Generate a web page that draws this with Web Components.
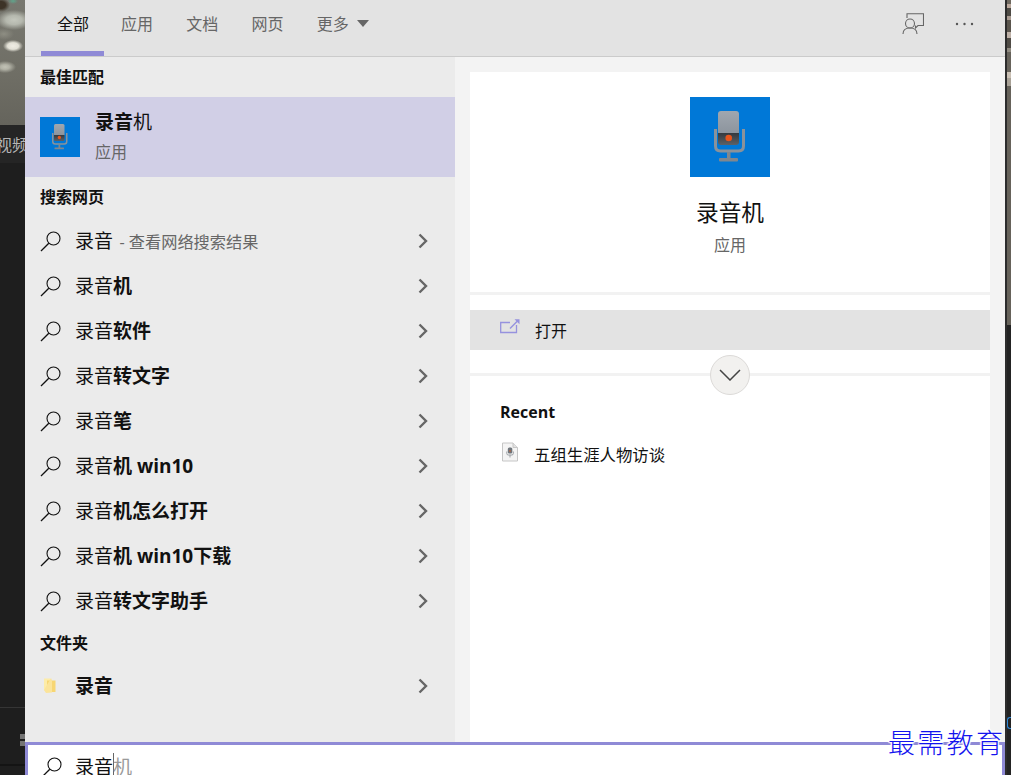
<!DOCTYPE html>
<html lang="zh"><head><meta charset="utf-8">
<style>
html,body{margin:0;padding:0;background:#1e1e1e;}
body{width:1011px;height:775px;overflow:hidden;font-family:"Open Sans","Noto Sans CJK SC",sans-serif;}
</style></head><body>
<search-shell>
  <search-tabs slot="tabs"></search-tabs>
  <results-pane slot="left"></results-pane>
  <preview-pane slot="right"></preview-pane>
  <search-box slot="box"></search-box>
</search-shell>
<script>
const FONT='"Open Sans","Noto Sans CJK SC",sans-serif';
const make=(name,html)=>{customElements.define(name,class extends HTMLElement{
  connectedCallback(){ if(this.shadowRoot)return; const r=this.attachShadow({mode:'open'}); r.innerHTML=html(this);} });};
const MIC=(s)=>`<svg width="${s}" height="${s}" viewBox="0 0 80 80" style="display:block"><defs>
<linearGradient id="mb" x1="0" y1="0" x2="0" y2="1"><stop offset="0" stop-color="#a0a7af"/><stop offset="1" stop-color="#8b939c"/></linearGradient>
<linearGradient id="mk" x1="0" y1="0" x2="0" y2="1"><stop offset="0" stop-color="#34393e"/><stop offset="1" stop-color="#5b6167"/></linearGradient></defs>
<rect width="80" height="80" fill="#0078d7"/>
<path d="M25.500 32v17q0 5 5 5h18q5 0 5-5V32" fill="none" stroke="#8a929a" stroke-width="3"/>
<rect x="28" y="14" width="21" height="24" rx="3" fill="url(#mb)"/>
<path d="M28 36h21v9q0 3-3 3h-15q-3 0-3-3z" fill="url(#mk)"/>
<circle cx="38.700" cy="41" r="3.300" fill="#e8541a"/>
<rect x="37" y="55" width="3.500" height="7" fill="#80878e"/>
<rect x="29" y="61" width="19" height="3.500" rx="1" fill="#80878e"/></svg>`;
const LENS=`<svg width="22" height="22" viewBox="0 0 22 22" style="display:block"><circle cx="13.500" cy="8.500" r="6.500" fill="none" stroke="#111" stroke-width="1.100"/><path d="M8.800 13.200L1 21" stroke="#111" stroke-width="1.300" fill="none"/></svg>`;

make('search-shell',()=>`<style>
:host{display:grid;grid-template-columns:25px 980px 6px;width:1011px;height:775px;overflow:hidden;font-family:${FONT};}
.panel{display:grid;grid-template-columns:430px 550px;grid-template-rows:57px 685px 33px;min-width:0;height:775px;}
::slotted([slot=tabs]),::slotted([slot=box]){grid-column:1 / 3;}
.mark{position:absolute;left:888px;top:726px;font:300 27px/32px "Noto Sans CJK JP",serif;letter-spacing:2.300px;color:#1414ee;white-space:nowrap;
 text-shadow:0 0 2px #fff,0 0 2px #fff,1px 1px 1px #fff,-1px -1px 1px #fff,1px -1px 1px #fff,-1px 1px 1px #fff;}
</style>
<left-gutter></left-gutter>
<div class="panel"><slot name="tabs"></slot><slot name="left"></slot><slot name="right"></slot><slot name="box"></slot></div>
<right-gutter></right-gutter>
<div class="mark">最需教育</div>`);

make('left-gutter',()=>`<style>
:host{display:flex;flex-direction:column;background:#1e1e1e;overflow:hidden;width:25px;height:775px;}
.photo{height:125px;flex:none;background:
 radial-gradient(ellipse 5px 3px at 13px 1px,#5fa58c 0,transparent 100%),
 radial-gradient(ellipse 9px 7px at 1px 5px,#3d3327 0,#3d3327 50%,transparent 100%),
 radial-gradient(ellipse 10px 6px at 13px 46px,#efece4 0,#e2e0d6 55%,transparent 100%),
 radial-gradient(ellipse 11px 6px at 5px 67px,#c2c2b6 0,#b2b2a6 40%,transparent 100%),
 radial-gradient(ellipse 18px 10px at 14px 20px,#c4c7bd 0,#b5b8ae 45%,transparent 100%),
 radial-gradient(ellipse 10px 6px at 4px 34px,#8e8e83 0,transparent 100%),
 linear-gradient(#787870,#6f6e65 60%,#65645c);}
.band{height:38px;flex:none;background:#252525;display:flex;align-items:center;color:#b5b5b5;font-size:16px;overflow:hidden;white-space:nowrap;}
.band span{margin-left:-4px}
.rest{flex:1;display:flex;flex-direction:column;}
.a{height:544px;flex:none;border-bottom:1px solid #353535;}
.b{flex:1;position:relative}
.dot{position:absolute;left:20px;width:5px;height:5px;background:#747474}
.c{position:absolute;left:0;right:0;top:56px;height:2px;background:#141414}
</style>
<div class="photo"></div><div class="band"><span>视频</span></div>
<div class="rest"><div class="a"></div><div class="b"><div class="dot" style="top:26px"></div><div class="dot" style="top:33px"></div><div class="c"></div></div></div>`);

make('right-gutter',()=>`<style>
:host{display:flex;width:6px;height:775px;background:#232323;overflow:hidden;}
.l{width:2px;flex:none;background:#2c2c2c}
.s{flex:1;display:flex;flex-direction:column}
.p{height:325px;flex:none;background:
 linear-gradient(#6e685f 0 4px,#b9a79b 4px 8px,#4d4a44 8px 16px,#a89a90 16px 20px,#5a554d 20px 32px,#bdb0a6 32px 38px,#4f4b45 38px 48px,#8f8a80 48px 52px,#67635b 52px 72px,#c9bfb3 72px 78px,#a8a196 78px 86px,#66625a 86px 325px);}
.blue{margin-top:392px;width:3px;height:10px;border:1px solid #2b87d8;border-right:none;border-radius:3px 0 0 3px;}
</style><div class="l"></div><div class="s"><div class="p"></div><div class="blue"></div></div>`);

make('search-tabs',()=>`<style>
:host{display:flex;align-items:stretch;height:57px;box-sizing:border-box;background:#e3e3e3;border-bottom:1px solid #cbcbcb;padding-left:16px;color:#666;font-size:16px;}
.t{display:flex;align-items:center;height:45px;padding:0 15px 6px 16px;margin-right:2.250px;border-bottom:5px solid transparent;white-space:nowrap;}
.on{color:#111;border-bottom-color:#8f8ad6;margin-right:1px;}
.sp{flex:1}
.caret{display:inline-block;width:0;height:0;border:6.500px solid transparent;border-top:7px solid #666;border-bottom:0;margin:1px 0 0 8.500px;}
.ic{display:flex;align-items:center;padding:0 0 9px;}
</style>
<div class="t on">全部</div><div class="t">应用</div><div class="t">文档</div><div class="t">网页</div><div class="t">更多<span class="caret"></span></div>
<div class="sp"></div>
<div class="ic" style="margin-right:31px"><svg width="22" height="22" viewBox="0 0 22 22" fill="none" stroke="#666" stroke-width="1.100"><path d="M5 5V.8h16.500v11.700H16l-2.500 2.500V12.500"/><circle cx="8" cy="10.500" r="4.500"/><path d="M1 21c0-4 3-6 7-6s7 2 7 6"/></svg></div>
<div class="ic" style="margin-right:31px"><svg width="19" height="4" viewBox="0 0 19 4" fill="#555"><circle cx="2" cy="2" r="1.200"/><circle cx="9.500" cy="2" r="1.200"/><circle cx="17" cy="2" r="1.200"/></svg></div>`);

make('section-head',()=>`<style>
:host{display:flex;align-items:center;box-sizing:border-box;height:40px;padding:0 0 2px 15px;font-size:16px;font-weight:700;color:#111;}
</style><slot></slot>`);

make('result-row',(h)=>`<style>
:host{display:flex;align-items:center;height:45px;padding:0 27px 0 15px;font-size:19px;color:#111;}
.i{width:22px;height:22px;flex:none;margin-right:13px;display:flex;align-items:center;justify-content:center}
.x{flex:1;white-space:nowrap;padding-bottom:2px;}
</style>
<div class="i">${h.hasAttribute('folder')?`<svg width="13" height="18" viewBox="0 0 13 18" style="margin-right:4px"><path d="M1 1.500h6l2 2v11H3L1 13z" fill="#fdeca8"/><path d="M4 3.500h8.500V15H4z" fill="#f7d673"/><path d="M8 1l1 2.500v12L3 16l-2-3z" fill="#fbe49a"/></svg>`:LENS}</div>
<div class="x"><slot></slot></div>
<svg width="10" height="16" viewBox="0 0 10 16" fill="none" stroke="#666" stroke-width="2.400"><path d="M1.500 1.500L8 8l-6.500 6.500"/></svg>`);

make('best-match',()=>`<style>
:host{display:flex;align-items:center;height:80px;background:#d1cfe6;padding-left:15px;color:#111;}
.t{margin-left:15px;display:flex;flex-direction:column;gap:7px;padding-bottom:3px}
.n{font-size:19px;line-height:26px}.n b{font-weight:700}
.s{font-size:16px;line-height:20px;color:#666}
</style>${MIC(40)}<div class="t"><div class="n"><b>录音</b>机</div><div class="s">应用</div></div>`);

make('results-pane',()=>`<style>
:host{display:block;background:#ebebeb;height:685px;overflow:hidden;}
.hint{font-size:16.200px;color:#666;font-weight:400;margin-left:1.500px}
</style>
<section-head>最佳匹配</section-head>
<best-match></best-match>
<section-head style="height:41px;padding-bottom:4px">搜索网页</section-head>
<result-row>录音 <span class="hint">- 查看网络搜索结果</span></result-row>
<result-row>录音<b>机</b></result-row>
<result-row>录音<b>软件</b></result-row>
<result-row>录音<b>转文字</b></result-row>
<result-row>录音<b>笔</b></result-row>
<result-row>录音<b>机 win10</b></result-row>
<result-row>录音<b>机怎么打开</b></result-row>
<result-row>录音<b>机 win10下载</b></result-row>
<result-row>录音<b>转文字助手</b></result-row>
<section-head>文件夹</section-head>
<result-row folder><b>录音</b></result-row>`);

make('preview-pane',()=>`<style>
:host{display:block;background:#f3f3f3;padding:15px 15px 0;height:685px;box-sizing:border-box;color:#111;}
.card{background:#fff;height:670px;display:flex;flex-direction:column;position:relative;}
.hero{height:223px;flex:none;box-sizing:border-box;padding-top:25px;display:flex;flex-direction:column;align-items:center;border-bottom:3px solid #f2f2f2;}
.title{font-size:22.700px;line-height:30px;margin-top:21px}
.sub{font-size:16px;line-height:20px;color:#666;margin-top:7px}
.open{margin-top:15px;height:40px;flex:none;background:#e3e3e3;display:flex;align-items:center;padding-left:30px;font-size:16px;}
.open svg{margin-right:15px;margin-top:-8px}
.gap{height:23px;flex:none;border-bottom:3px solid #f2f2f2;}
.more{position:absolute;left:240px;top:283px;width:38px;height:38px;border:1px solid #dcdad8;border-radius:50%;background:#f2f1ef;display:flex;align-items:center;justify-content:center;}
.rec{margin:24px 0 0 30px;font-size:16px;font-weight:700;line-height:24px;}
.item{margin:19px 0 0 31px;display:flex;align-items:center;font-size:16.400px;line-height:24px;}
.item svg{margin-right:15px;margin-top:-6px}
</style>
<div class="card">
<div class="hero">${MIC(80)}<div class="title">录音机</div><div class="sub">应用</div></div>
<div class="open"><svg width="20" height="16" viewBox="0 0 20 16" fill="none" stroke="#9692de" stroke-width="1.300"><path d="M16.500 7V14.500H.7V4.500H10"/><path d="M10 10.500L17.500 3" stroke-width="1.400"/><path d="M14.500 1.300H19.500V6.300z" fill="#9692de" stroke="none"/></svg>打开</div>
<div class="gap"></div>
<div class="more"><svg width="22" height="12" viewBox="0 0 22 12" fill="none" stroke="#444" stroke-width="1.500"><path d="M1 1l10 10L21 1"/></svg></div>
<div class="rec">Recent</div>
<div class="item"><svg width="18" height="20" viewBox="0 0 18 20"><path d="M1.500 1H12l4.500 4.500v13.500h-15z" fill="#f4f4f4" stroke="#c6c6c6"/><path d="M12 1v4.500h4.500" fill="#e2e2e2" stroke="#c6c6c6"/><rect x="6.800" y="5.500" width="4.500" height="6" rx="1.500" fill="#6f757b"/><circle cx="9" cy="9" r="1" fill="#a8674a"/><path d="M5.800 9.500v2q0 1.500 1.500 1.500h3.500q1.500 0 1.500-1.500v-2M9 13v2.500" fill="none" stroke="#9a9ea3"/></svg>五组生涯人物访谈</div>
</div>`);

make('search-box',()=>`<style>
:host{display:flex;align-items:flex-start;height:33px;box-sizing:border-box;background:#fff;border:3px solid #8f8ad6;border-bottom:none;padding:8px 0 0 13px;font-size:19px;color:#111;overflow:hidden;}
.i{margin:3px 12px 0 0;flex:none}
.txt{line-height:26px;white-space:nowrap;position:relative;}
.cur{display:inline-block;width:1px;height:24px;background:#666;vertical-align:-3px;margin-right:-1px}
.g{color:#9a9a9a}
</style><div class="i">${LENS}</div><div class="txt">录音<span class="cur"></span><span class="g">机</span></div>`);
</script></body></html>
